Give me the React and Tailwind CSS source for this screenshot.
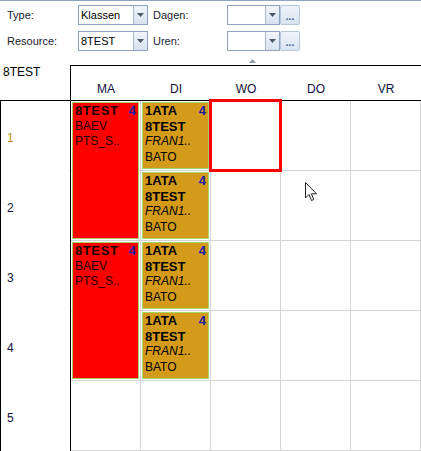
import React from "react";

const days = ["MA", "DI", "WO", "DO", "VR"];
const hours = [1, 2, 3, 4, 5];

const Combo = ({ value, width }) => (
  <div className={`flex h-[20px] border border-[#8fa3bf] bg-white ${width}`}>
    <div className="flex-1 pl-[2px] text-[11px] leading-[18px] text-black">{value}</div>
    <div className="flex w-[14px] items-center justify-center border-l border-[#a9b9cf] bg-gradient-to-b from-[#f1f5fb] to-[#d6e2f1]">
      <svg width="7" height="4" viewBox="0 0 7 4">
        <path d="M0 0 H7 L3.5 4 Z" fill="#4c5a70" />
      </svg>
    </div>
  </div>
);

const DotsButton = () => (
  <div className="flex h-[20px] w-[20px] items-end justify-center rounded-[2px] border border-[#b7c6d9] bg-gradient-to-b from-[#eef3fa] to-[#d9e4f2] pb-[3px]">
    <span className="text-[10px] leading-[8px] font-bold text-[#3d5f95]">...</span>
  </div>
);

const Lesson = ({ pos, red, top, lines }) => (
  <div
    className={`${pos} z-10 mt-px mr-[2px] mb-[2px] ml-px border px-[2px] leading-[15.5px] ${
      red ? "border-[#a4cf63] bg-[#ff0000] text-[#1a0000]" : "border-[#a8d36a] bg-[#d49a1a] text-black"
    }`}
  >
    <div className="flex justify-between text-[13px] font-bold">
      <span className={red ? "tracking-[0.6px]" : ""}>{top}</span>
      <span className="text-[#1c1ca6]">4</span>
    </div>
    {lines.map((l, i) => (
      <div key={i} className={`text-[12px] whitespace-nowrap ${l.cls || ""}`}>
        {l.text}
      </div>
    ))}
  </div>
);

export default function App() {
  const redLines = [{ text: "BAEV" }, { text: "PTS_S.." }];
  const goldLines = [
    { text: "8TEST", cls: "text-[13px] font-bold" },
    { text: "FRAN1..", cls: "italic" },
    { text: "BATO" },
  ];

  return (
    <div className="relative h-[451px] w-[421px] overflow-hidden bg-white font-['Liberation_Sans',Arial,sans-serif] text-black">
      {/* toolbar */}
      <div className="relative h-[65px] border-t border-[#8fa3c0] pt-[4px]">
        <div className="flex flex-col gap-[6px]">
          <div className="flex items-center">
            <div className="w-[78px] pl-[7px] text-[11px] text-[#1b1b2e]">Type:</div>
            <Combo value="Klassen" width="w-[70px]" />
            <div className="w-[79px] pl-[5px] text-[11px] text-[#1b1b2e]">Dagen:</div>
            <Combo value="" width="w-[53px]" />
            <DotsButton />
          </div>
          <div className="flex items-center">
            <div className="w-[78px] pl-[7px] text-[11px] text-[#1b1b2e]">Resource:</div>
            <Combo value="8TEST" width="w-[70px]" />
            <div className="w-[79px] pl-[5px] text-[11px] text-[#1b1b2e]">Uren:</div>
            <Combo value="" width="w-[53px]" />
            <DotsButton />
          </div>
        </div>
        <svg className="absolute top-[58px] left-[249px]" width="7" height="4" viewBox="0 0 7 4">
          <path d="M3.5 0 L7 4 H0 Z" fill="#8c9ab0" />
        </svg>
      </div>

      {/* header */}
      <div className="flex h-[36px] border-b border-black">
        <div className="w-[70px] pl-[3px] text-[12px] leading-[14px]">8TEST</div>
        <div className="flex flex-1 border-t border-l border-black">
          {days.map((d) => (
            <div key={d} className="flex w-[70px] items-end justify-center pb-[4px] text-[12px] leading-[14px] text-[#10103a]">
              {d}
            </div>
          ))}
        </div>
      </div>

      {/* body */}
      <div className="flex">
        <div className="w-[71px] border-r border-l border-black">
          {hours.map((h) => (
            <div
              key={h}
              className={`h-[70px] pt-[30px] pl-[6px] text-[12px] leading-[14px] ${h === 1 ? "text-[#c8880f]" : "text-[#10103a]"}`}
            >
              {h}
            </div>
          ))}
        </div>
        <div className="grid grid-cols-[repeat(5,70px)] grid-rows-[repeat(5,70px)]">
          {hours.map((h, r) =>
            days.map((d, c) => (
              <div
                key={`${h}-${d}`}
                className="border-r border-b border-[#d4d4d4]"
                style={{ gridRow: r + 1, gridColumn: c + 1 }}
              />
            ))
          )}
          <Lesson pos="col-start-1 row-start-1 row-span-2" red top="8TEST" lines={redLines} />
          <Lesson pos="col-start-1 row-start-3 row-span-2" red top="8TEST" lines={redLines} />
          <Lesson pos="col-start-2 row-start-1" top="1ATA" lines={goldLines} />
          <Lesson pos="col-start-2 row-start-2" top="1ATA" lines={goldLines} />
          <Lesson pos="col-start-2 row-start-3" top="1ATA" lines={goldLines} />
          <Lesson pos="col-start-2 row-start-4" top="1ATA" lines={goldLines} />
          <div className="z-20 col-start-3 row-start-1 -mt-[2px] -ml-[2px] h-[73px] w-[73px] border-[3px] border-[#ff0000]" />
        </div>
      </div>

      {/* mouse pointer */}
      <svg className="absolute top-[182px] left-[305px]" width="13" height="20" viewBox="0 0 13 20">
        <path
          d="M0.5 0.5 V16 L4 12.5 L6.5 18.5 L8.8 17.5 L6.4 11.8 H11.5 Z"
          fill="white"
          stroke="#222"
          strokeWidth="1"
        />
      </svg>
    </div>
  );
}
